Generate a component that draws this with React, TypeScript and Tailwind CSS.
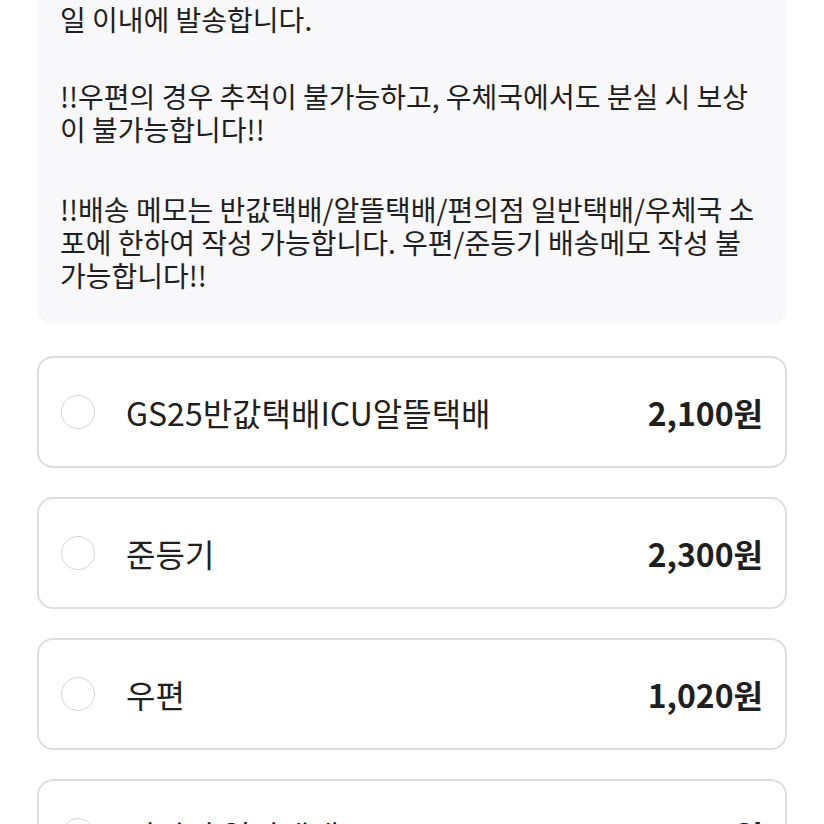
const options = [
  { name: "GS25반값택배ICU알뜰택배", price: "2,100원" },
  { name: "준등기", price: "2,300원" },
  { name: "우편", price: "1,020원" },
  { name: "편의점 일반택배", price: "1,800원" },
];

function Radio() {
  return <span className="h-[34px] w-[34px] shrink-0 rounded-full border-[1.5px] border-[#d6d6d6] bg-white" />;
}

export default function App() {
  return (
    <div
      className="h-[824px] overflow-hidden bg-white px-[37px] text-[#1f1f1f]"
      style={{ fontFamily: '"Noto Sans CJK KR", "Noto Sans", sans-serif' }}
    >
      <div className="rounded-b-2xl bg-[#f8f7fa] pb-[32px] pl-[23px] pr-[16px] pt-[3px] text-[28px] leading-[33px]">
        <p>일 이내에 발송합니다.</p>
        <p className="mt-[44px]">
          !!우편의 경우 추적이 불가능하고, 우체국에서도 분실 시 보상
          <br />이 불가능합니다!!
        </p>
        <p className="mt-[47px]">
          !!배송 메모는 반값택배/알뜰택배/편의점 일반택배/우체국 소
          <br />
          포에 한하여 작성 가능합니다. 우편/준등기 배송메모 작성 불
          <br />
          가능합니다!!
        </p>
      </div>

      <div className="mt-[32px] flex flex-col gap-[29px]">
        {options.map((o) => (
          <div
            key={o.name}
            className="flex h-[112px] shrink-0 items-center rounded-2xl border-2 border-[#dedede] bg-white pl-[22px] pr-[22px]"
          >
            <Radio />
            <span className="ml-[31px] text-[32px]">{o.name}</span>
            <span className="ml-auto text-[32px] font-bold">{o.price}</span>
          </div>
        ))}
      </div>
    </div>
  );
}
